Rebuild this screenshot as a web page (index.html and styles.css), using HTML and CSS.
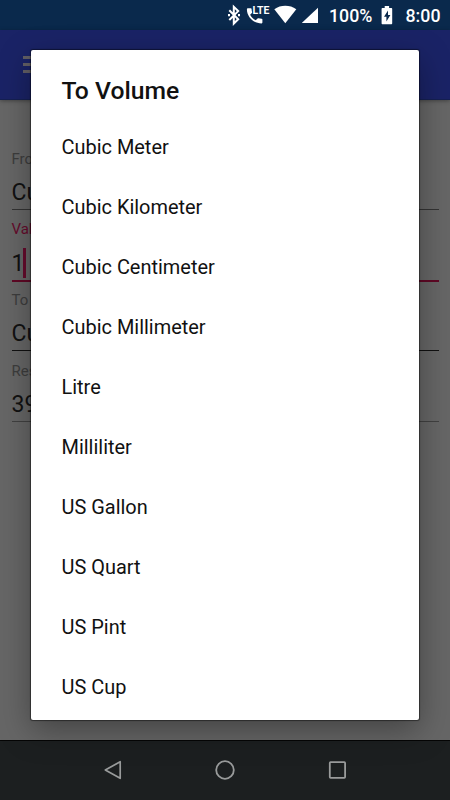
FILE: index.html
```html
<!DOCTYPE html>
<html lang="en">
<head>
<meta charset="utf-8">
<title>Volume converter</title>
<link rel="stylesheet" href="styles.css">
</head>
<body>
<div class="screen">
  <header class="status">
    <svg class="indicators" width="100" height="30" viewBox="0 0 100 30" aria-hidden="true">
      <path d="M9.300 10.300l8.900 8.900-4.400 4.300V6.800l4.400 4.300-8.900 8.900" fill="none" stroke="#fff" stroke-width="2"/>
      <path d="M8 15.100h2M18 15.100h2" stroke="#fff" stroke-width="2.200"/>
      <path d="M27.800 8.200h3c.5 0 .8.3.8.800 0 1.100.2 2.100.5 3 .1.300 0 .700-.2.900l-1.800 1.800c1.300 2.400 3.200 4.300 5.600 5.600l1.900-1.900c.2-.2.500-.3.900-.2.900.300 2 .5 3.100.5.500 0 .8.400.8.900v3c0 .5-.3.800-.8.800C33.500 23.400 26.800 16.700 26.900 9c0-.5.400-.8.900-.8z" fill="#fff"/>
      <text class="lte" x="32.600" y="13.800" textLength="16.800" lengthAdjust="spacingAndGlyphs">LTE</text>
      <path d="M65.300 23.300L54.300 9.200c6.500-4.600 15.500-4.600 22 0z" fill="#fff"/>
      <path d="M82 23V22.800L98 7.800V23z" fill="#fff"/>
    </svg>
    <span class="percent">100%</span>
    <svg class="battery" width="12" height="30" viewBox="0 0 12 30" aria-hidden="true">
      <path d="M3.700 6h4.400v2h2.100c.6 0 1 .4 1 1v14.200c0 .6-.4 1-1 1H1.600c-.6 0-1-.4-1-1V9c0-.6.400-1 1-1h2.100z" fill="#fff"/>
      <path d="M7 10.500L3 16.800h2.400v4.800l4-6.600H7z" fill="#0a294c"/>
    </svg>
    <time class="clock">8:00</time>
  </header>
  <div class="appbar"><div class="menu"><i></i><i></i><i></i></div></div>
  <main class="form">
    <div class="field"><label>From</label><p>Cu</p></div>
    <div class="field active"><label>Val</label><p>1<span class="caret"></span></p></div>
    <div class="field strong"><label>To</label><p>Cu</p></div>
    <div class="field result"><label>Res</label><p>39</p></div>
  </main>
  <nav class="nav">
    <svg width="20" height="20" viewBox="0 0 20 20"><path d="M17.200 1.700v16.600L2.300 10z" fill="none" stroke="#999b9b" stroke-width="1.700" stroke-linejoin="round"/></svg>
    <svg width="20" height="20" viewBox="0 0 20 20"><circle cx="10" cy="10" r="8.800" fill="none" stroke="#999b9b" stroke-width="1.800"/></svg>
    <svg width="20" height="20" viewBox="0 0 20 20"><rect x="1.800" y="2.200" width="15.300" height="15.600" rx=".8" fill="none" stroke="#999b9b" stroke-width="1.800"/></svg>
  </nav>
  <section class="dialog" role="dialog">
    <h1>To Volume</h1>
    <ul>
      <li>Cubic Meter</li><li>Cubic Kilometer</li><li>Cubic Centimeter</li><li>Cubic Millimeter</li><li>Litre</li><li>Milliliter</li><li>US Gallon</li><li>US Quart</li><li>US Pint</li><li>US Cup</li>
    </ul>
  </section>
</div>
</body>
</html>
```
FILE: styles.css
```css
* { box-sizing: border-box; margin: 0; padding: 0; }
body { width: 450px; height: 800px; overflow: hidden; font-family: Roboto, sans-serif; }
.screen { position: relative; width: 450px; height: 800px; display: flex; flex-direction: column; background: #666; }
.status { height: 30px; flex: none; display: flex; align-items: center; padding-left: 220px; background: #0a294c; color: #fff; font-size: 17.800px; font-weight: 500; line-height: 30px; white-space: nowrap; }
.percent { width: 52px; margin-left: 9px; padding-top: 2px; }
.clock { margin-left: 12.500px; padding-top: 2px; }
.indicators, .battery { flex: none; display: block; }
.lte { font: 700 10px Roboto, sans-serif; fill: #fff; }
.appbar { height: 70px; flex: none; display: flex; padding: 26px 0 0 23px; background: #1a2366; border-bottom: 1px solid #152052; box-shadow: 0 1px 4px rgba(0,0,0,.35); }
.menu { display: flex; flex-direction: column; gap: 4px; }
.menu i { display: block; width: 22px; height: 3px; background: #625f65; }
.form { flex: 1; padding: 48px 11px 0 11.500px; }
.field { height: 70.500px; }
.field label { display: block; height: 20px; font-size: 15px; line-height: 22px; color: #3d3d3d; }
.field p { display: flex; align-items: center; height: 42px; padding-top: 8px; border-bottom: 1px solid #333; font-size: 23px; color: #111; }
.active label { color: #650b2c; line-height: 21px; }
.active p { height: 43px; border-bottom: 2px solid #5f0825; }
.strong p { border-color: #111; }
.result p { border-color: #414141; }
.caret { width: 2.500px; height: 30px; margin-left: -1px; background: #650b2c; }
.nav { height: 60px; flex: none; display: flex; justify-content: center; gap: 92.500px; padding-top: 19px; background: #1c1f20; border-top: 1px solid #050505; }
.nav svg { flex: none; }
.dialog { position: absolute; left: 31px; top: 50px; width: 388px; height: 670px; padding-left: 30.500px; overflow: hidden; border-radius: 2px; background: #fff; box-shadow: 0 0 1px 1px rgba(0,0,0,.45), 0 10px 32px rgba(0,0,0,.35); color: #111; }
.dialog h1 { height: 67px; padding-top: 26px; font-size: 24.700px; line-height: 30px; font-weight: 500; }
.dialog ul { list-style: none; }
.dialog li { height: 60px; font-size: 19.950px; line-height: 60px; }
```
